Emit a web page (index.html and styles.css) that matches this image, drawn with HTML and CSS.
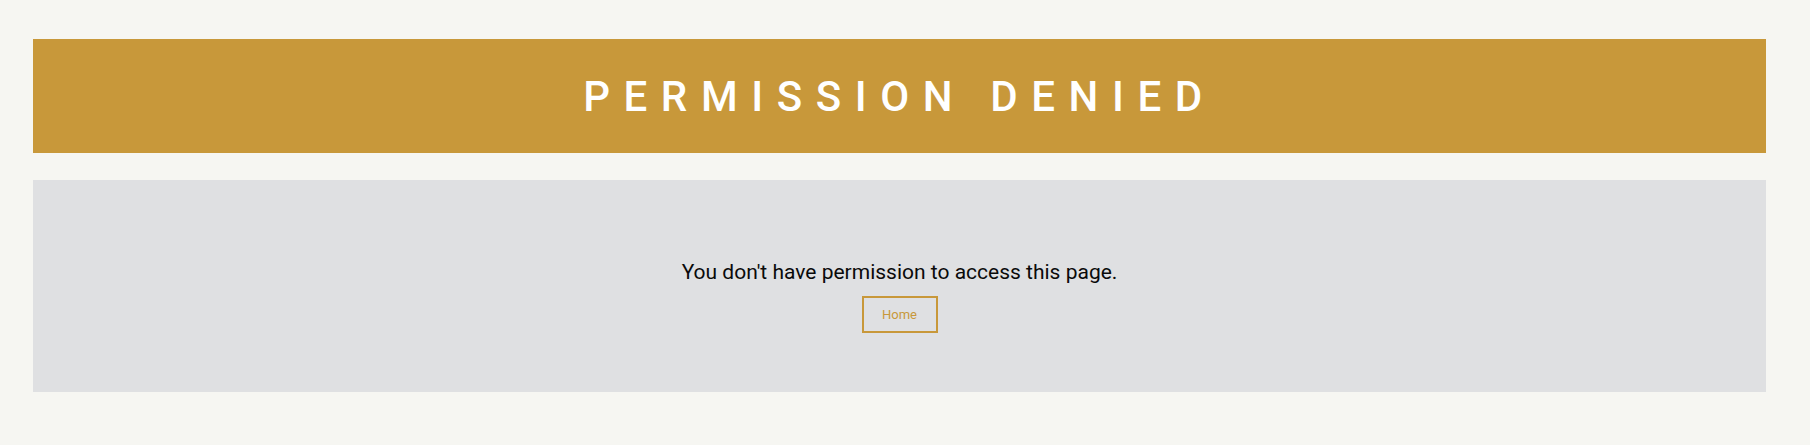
FILE: index.html
```html
<!DOCTYPE html>
<html lang="en">
<head>
<meta charset="utf-8">
<title>Permission Denied</title>
<link rel="stylesheet" href="styles.css">
</head>
<body>
<div class="page">
  <header class="banner">
    <h1 class="banner-title">PERMISSION DENIED</h1>
  </header>
  <main class="panel">
    <p class="panel-message">You don't have permission to access this page.</p>
    <a class="home-button" href="#">Home</a>
  </main>
</div>
</body>
</html>
```

FILE: styles.css
```css
html, body {
  margin: 0;
  padding: 0;
  background: #f6f6f2;
  font-family: Roboto, "Liberation Sans", Arial, sans-serif;
}

.page {
  padding: 39px 44px 0 33px;
  display: flex;
  flex-direction: column;
  gap: 27px;
}

.banner {
  height: 114px;
  background: #c8983a;
  display: flex;
  align-items: center;
  justify-content: center;
}

.banner-title {
  margin: 0;
  color: #ffffff;
  font-size: 42px;
  font-weight: 500;
  letter-spacing: 13.6px;
  line-height: 1;
  padding-top: 2px;
}

.panel {
  background: #dfe0e2;
  height: 212px;
  box-sizing: border-box;
  padding-top: 80px;
  display: flex;
  flex-direction: column;
  align-items: center;
}

.panel-message {
  margin: 0;
  font-size: 21px;
  line-height: 24px;
  color: #0a0a0a;
}

.home-button {
  margin-top: 12px;
  box-sizing: border-box;
  width: 76px;
  height: 37px;
  border: 2px solid #c8983a;
  color: #c8983a;
  font-size: 13px;
  line-height: 33px;
  text-align: center;
  text-decoration: none;
}
```
